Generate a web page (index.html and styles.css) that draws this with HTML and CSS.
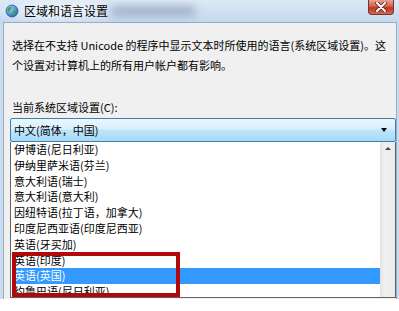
FILE: index.html
```html
<!DOCTYPE html>
<html lang="zh-CN">

<head>
  <meta charset="UTF-8" />
  <meta name="viewport" content="width=device-width, initial-scale=1.0" />
  <title>区域和语言设置</title>
  <link rel="stylesheet" href="styles.css">
</head>

<body>
  <div class="window">
    <div class="titlebar">
      <svg class="app-icon" width="14" height="14" viewBox="0 0 14 14">
        <defs>
          <radialGradient id="sea" cx="0.35" cy="0.3" r="0.8">
            <stop offset="0" stop-color="#9fd4ff" />
            <stop offset="1" stop-color="#1d5fb5" />
          </radialGradient>
        </defs>
        <circle cx="7" cy="7" r="6" fill="url(#sea)" stroke="#2a5a94" stroke-width="0.8" />
        <path d="M3 4 Q5 2.5 7 3.5 Q6.5 5.5 5 6 Q4.5 8 3 7.5 Q2 6 3 4 Z" fill="#3fa43a" />
        <path d="M8 7 Q10 6 11.5 7.5 Q11 10 9 11 Q8 9.5 8 7 Z" fill="#3fa43a" />
      </svg>
      <span class="title">区域和语言设置</span>
      <div class="smudge"></div>
      <div class="close-btn">
        <svg width="12" height="10" viewBox="0 0 12 10">
          <path d="M2 1 L10 9 M10 1 L2 9" stroke="#5a2020" stroke-width="3.6" stroke-linecap="round" />
          <path d="M2 1 L10 9 M10 1 L2 9" stroke="#fff" stroke-width="2" stroke-linecap="round" />
        </svg>
      </div>
    </div>

    <div class="client">
      <p class="intro">选择在不支持 Unicode 的程序中显示文本时所使用的语言(系统区域设置)。这个设置对计算机上的所有用户帐户都有影响。</p>
      <div class="label">当前系统区域设置(C):</div>

      <div class="combo">
        <span>中文(简体，中国)</span>
        <span class="arrow"></span>
      </div>

      <div class="dropdown">
        <ul class="items">
          <li>伊博语(尼日利亚)</li>
          <li>伊纳里萨米语(芬兰)</li>
          <li>意大利语(瑞士)</li>
          <li>意大利语(意大利)</li>
          <li>因纽特语(拉丁语，加拿大)</li>
          <li>印度尼西亚语(印度尼西亚)</li>
          <li>英语(牙买加)</li>
          <li>英语(印度)</li>
          <li class="selected">英语(英国)</li>
          <li>约鲁巴语(尼日利亚)</li>
        </ul>
        <div class="scrollbar">
          <span class="up"></span>
        </div>
        <div class="mark"></div>
      </div>
    </div>
  </div>
</body>

</html>
```

FILE: styles.css
```css
body {
  margin: 0;
  width: 399px;
  height: 311px;
  overflow: hidden;
  background: #ffffff;
  font-family: "Noto Sans CJK SC", "Noto Sans", sans-serif;
  font-size: 11px;
  color: #000;
}

.window {
  height: 299px;
  display: flex;
  flex-direction: column;
  background: #c8dbef;
}

/* Win7 style title bar */
.titlebar {
  position: relative;
  height: 22px;
  flex-shrink: 0;
  display: flex;
  align-items: center;
  gap: 5px;
  padding-left: 5px;
  background:
    radial-gradient(ellipse 70px 14px at 60px 11px, rgba(255, 255, 255, 0.75), rgba(255, 255, 255, 0) 100%),
    linear-gradient(#dde9f6, #c5d8ee);
}

.app-icon {
  flex-shrink: 0;
}

.title {
  font-size: 12px;
  color: #000;
  line-height: 22px;
}

.smudge {
  position: absolute;
  left: 110px;
  top: 6px;
  width: 85px;
  height: 10px;
  background: rgba(100, 120, 150, 0.45);
  filter: blur(4px);
}

.close-btn {
  position: absolute;
  top: 0;
  left: 368px;
  width: 26px;
  height: 15px;
  box-sizing: border-box;
  border: 1px solid #7a3330;
  border-top: none;
  border-radius: 0 0 4px 4px;
  background: linear-gradient(#e7a393, #d2604d 45%, #c0351f 55%, #d26a4c);
  display: flex;
  align-items: center;
  justify-content: center;
}

.client {
  flex: 1;
  margin: 0 2px 0 3px;
  padding: 12px 0 0 6px;
  background: #f0f0f0;
  border: 1px solid #98adc4;
  border-bottom: none;
}

.intro {
  margin: 0;
  padding-left: 2px;
  line-height: 20px;
  width: 384px;
}

.label {
  margin-top: 23px;
  padding-left: 2px;
  line-height: 18px;
}

.combo {
  margin-top: 2px;
  width: 386px;
  height: 24px;
  box-sizing: border-box;
  border: 1px solid #3c7fb1;
  border-radius: 2px;
  padding-left: 3px;
  display: flex;
  align-items: center;
  justify-content: space-between;
  background: linear-gradient(#eaf6fd, #d9f0fc 45%, #bee6fd 50%, #a7d9f5);
}

.arrow {
  margin-right: 8px;
  width: 0;
  height: 0;
  border-left: 3.5px solid transparent;
  border-right: 3.5px solid transparent;
  border-top: 4px solid #000;
}

.dropdown {
  position: relative;
  width: 386px;
  height: 156px;
  box-sizing: border-box;
  border: 1px solid #646464;
  border-top: none;
  background: #fff;
  display: flex;
  overflow: hidden;
}

.items {
  list-style: none;
  margin: 0;
  padding: 0 0 0 1px;
  flex: 1;
}

.items li {
  height: 15.8px;
  line-height: 15.8px;
  padding-left: 2px;
  white-space: nowrap;
}

.items li.selected {
  background: #3399ff;
  color: #fff;
}

.scrollbar {
  width: 15px;
  flex-shrink: 0;
  background: linear-gradient(90deg, #e3e3e3, #f0f0f0 30%, #eaeaea);
  display: flex;
  justify-content: center;
  padding-top: 5px;
  box-sizing: border-box;
}

.up {
  width: 0;
  height: 0;
  border-left: 3px solid transparent;
  border-right: 3px solid transparent;
  border-bottom: 3px solid #444;
}

/* red highlight drawn over the list */
.mark {
  position: absolute;
  left: 1px;
  top: 110px;
  width: 168px;
  height: 45px;
  box-sizing: border-box;
  border: 4px solid #b0090b;
}
```
